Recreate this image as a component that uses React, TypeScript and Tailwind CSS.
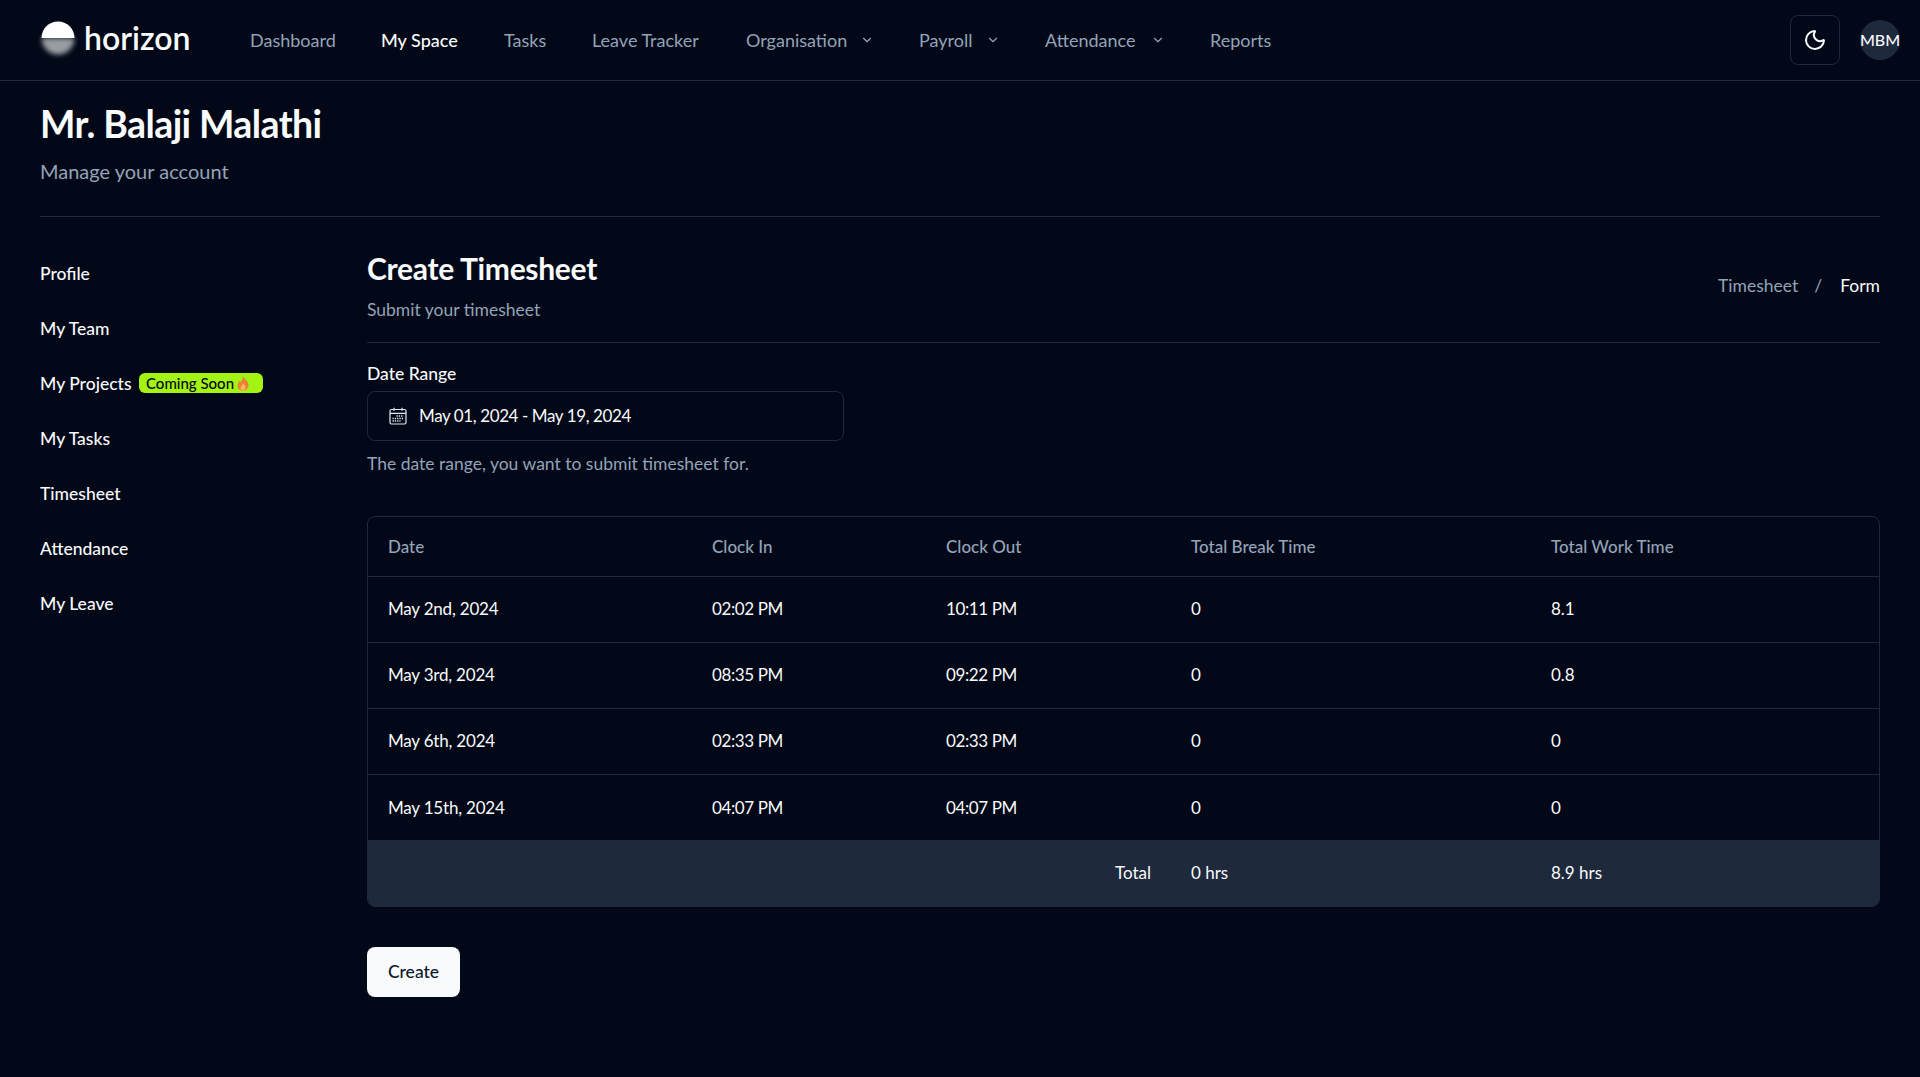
import { ChevronDown, Moon } from "lucide-react";

const navItems = [
  { label: "Dashboard", width: "w-[86px]" },
  { label: "My Space", width: "w-[78px]", active: true },
  { label: "Tasks", width: "w-[43px]" },
  { label: "Leave Tracker", width: "w-[109px]" },
  { label: "Organisation", width: "w-[99px]", menu: true },
  { label: "Payroll", width: "w-[52px]", menu: true },
  { label: "Attendance", width: "w-[91px]", menu: true },
  { label: "Reports", width: "w-[60px]" },
];

const sideItems = ["Profile", "My Team", "My Projects", "My Tasks", "Timesheet", "Attendance", "My Leave"];

const rows = [
  { date: "May 2nd, 2024", clockIn: "02:02 PM", clockOut: "10:11 PM", breakTime: "0", work: "8.1" },
  { date: "May 3rd, 2024", clockIn: "08:35 PM", clockOut: "09:22 PM", breakTime: "0", work: "0.8" },
  { date: "May 6th, 2024", clockIn: "02:33 PM", clockOut: "02:33 PM", breakTime: "0", work: "0" },
  { date: "May 15th, 2024", clockIn: "04:07 PM", clockOut: "04:07 PM", breakTime: "0", work: "0" },
];

function Logo() {
  return (
    <svg width="40" height="44" viewBox="0 0 40 44" className="shrink-0">
      <defs>
        <filter id="logo-blur" x="-30%" y="-30%" width="160%" height="160%">
          <feGaussianBlur stdDeviation="2.500" />
        </filter>
      </defs>
      <path d="M3.500 20a16.500 16.500 0 0 0 33 0z" fill="#9a9da3" filter="url(#logo-blur)" />
      <path d="M3.500 20a16.500 16.500 0 0 1 33 0z" fill="#ffffff" />
    </svg>
  );
}

function Flame() {
  return (
    <svg width="12" height="15" viewBox="0 0 12 15">
      <path d="M6 0c.6 2.400 4.600 4.400 5.400 8 .6 3.600-2 6.700-5.400 6.700S0 12 .6 8.800C1 7 2.200 6 2.800 4.600c.5.800.8 1.400 1.100 1.900C4.800 4.600 6 2.600 6 0z" fill="#ee7f3a" />
      <path d="M6.200 7c.4 1.300 2.400 2.600 2.400 4.600 0 1.700-1.200 3-2.700 3s-2.600-1.300-2.500-2.800c.1-1.400 2.300-3 2.800-4.800z" fill="#fbb85a" />
    </svg>
  );
}

function CalendarGlyph() {
  return (
    <svg width="18" height="18" viewBox="0 0 18 18" fill="none" stroke="#e2e8f0" strokeWidth="1.200">
      <rect x="1" y="2.500" width="16" height="14.500" rx="1.500" />
      <path d="M1 6.300h16M5 .8v3M13 .8v3" />
      <path d="M7.500 9h7M3.500 11.500h11M3.500 14h8" strokeWidth="1.400" strokeDasharray="1.300 1" />
    </svg>
  );
}

export default function App() {
  return (
    <div className="min-h-[1077px] bg-[#020817] text-[#f8fafc] font-['Lato',sans-serif]">
      {/* Top bar */}
      <header className="flex h-[81px] items-center border-b border-[#1e293b] pl-[38px] pr-[20px]">
        <div className="flex w-[212px] items-center">
          <Logo />
          <span className="ml-[6px] -mt-[4px] text-[32px] font-semibold leading-none">horizon</span>
        </div>
        <nav className="flex items-center gap-[45px] text-[18px]">
          {navItems.map((item) => (
            <div key={item.label} className="flex items-center">
              <span
                className={`${item.width} whitespace-nowrap ${item.active ? "font-medium text-[#f8fafc]" : "text-[#94a3b8]"}`}
              >
                {item.label}
              </span>
              {item.menu && <ChevronDown size={14} className="ml-[15px] text-[#94a3b8]" />}
            </div>
          ))}
        </nav>
        <div className="ml-auto flex items-center gap-[20px]">
          <button className="flex h-[50px] w-[50px] items-center justify-center rounded-lg border border-[#1e293b]">
            <Moon size={24} />
          </button>
          <div className="flex h-10 w-10 items-center justify-center rounded-full bg-[#1e293b] text-[16px] font-medium">
            MBM
          </div>
        </div>
      </header>

      <main className="px-10">
        {/* Account heading */}
        <div className="border-b border-[#1e293b] pb-[31px] pt-[19px]">
          <h1 className="text-[37.500px] font-bold leading-[48px] tracking-[-0.6px]">Mr. Balaji Malathi</h1>
          <p className="mt-[9px] text-[20px] leading-7 text-[#94a3b8]">Manage your account</p>
        </div>

        <div className="flex">
          {/* Side menu */}
          <aside className="w-[327px] shrink-0 pt-[30px]">
            <ul className="flex flex-col">
              {sideItems.map((item) => (
                <li key={item} className="flex h-[55px] items-center text-[17.500px] font-medium">
                  {item === "My Projects" ? <span className="w-[88px] whitespace-nowrap">{item}</span> : item}
                  {item === "My Projects" && (
                    <span className="mb-[3px] ml-[11px] flex h-5 w-[124px] items-center gap-[3px] rounded-md bg-[#a3f313] pl-[7px] text-[15px] leading-none text-[#020817]">
                      Coming Soon
                      <Flame />
                    </span>
                  )}
                </li>
              ))}
            </ul>
          </aside>

          {/* Form */}
          <section className="min-w-0 flex-1 pt-[30px]">
            <div className="flex items-center justify-between border-b border-[#1e293b] pb-[20px]">
              <div>
                <h2 className="text-[30px] font-bold leading-[42px] tracking-[-0.3px]">Create Timesheet</h2>
                <p className="mt-[9px] text-[17.500px] leading-6 text-[#94a3b8]">Submit your timesheet</p>
              </div>
              <div className="flex items-center gap-[18px] pt-[4px] text-[17.500px]">
                <span className="-mr-[2px] text-[#94a3b8]">Timesheet</span>
                <span className="text-[#94a3b8]">/</span>
                <span>Form</span>
              </div>
            </div>

            <label className="mt-[19px] block text-[17.500px] font-medium leading-6">Date Range</label>
            <div className="mt-[5px] flex h-[50px] w-[477px] items-center gap-[12px] rounded-lg border border-[#1e293b] pl-[21px] text-[17px] tracking-[-0.4px]">
              <CalendarGlyph />
              May 01, 2024 - May 19, 2024
            </div>
            <p className="mt-[11px] text-[17.500px] leading-6 text-[#94a3b8]">The date range, you want to submit timesheet for.</p>

            <div className="mt-[40px] overflow-hidden rounded-lg border border-[#1e293b]">
              <table className="w-full table-fixed border-collapse text-[17px]">
                <colgroup>
                  <col className="w-[324px]" />
                  <col className="w-[234px]" />
                  <col className="w-[245px]" />
                  <col className="w-[360px]" />
                  <col />
                </colgroup>
                <thead>
                  <tr className="h-[59px] border-b border-[#1e293b] text-left text-[#94a3b8]">
                    <th className="pl-5 font-medium">Date</th>
                    <th className="pl-5 font-medium">Clock In</th>
                    <th className="pl-5 font-medium">Clock Out</th>
                    <th className="pl-5 font-medium">Total Break Time</th>
                    <th className="pl-5 font-medium">Total Work Time</th>
                  </tr>
                </thead>
                <tbody>
                  {rows.map((row) => (
                    <tr key={row.date} className="h-[66px] border-b border-[#1e293b] last:border-b-0">
                      <td className="pl-5 tracking-[-0.2px]">{row.date}</td>
                      <td className="pl-5 tracking-[-0.4px]">{row.clockIn}</td>
                      <td className="pl-5 tracking-[-0.4px]">{row.clockOut}</td>
                      <td className="pl-5">{row.breakTime}</td>
                      <td className="pl-5">{row.work}</td>
                    </tr>
                  ))}
                </tbody>
                <tfoot>
                  <tr className="h-[66px] bg-[#1e293b]">
                    <td colSpan={3} className="pr-5 text-right">Total</td>
                    <td className="pl-5">0 hrs</td>
                    <td className="pl-5">8.9 hrs</td>
                  </tr>
                </tfoot>
              </table>
            </div>

            <button className="mt-[40px] h-[50px] w-[93px] rounded-lg bg-[#f8fafc] text-[17.500px] font-medium text-[#0f172a]">
              Create
            </button>
          </section>
        </div>
      </main>
    </div>
  );
}
